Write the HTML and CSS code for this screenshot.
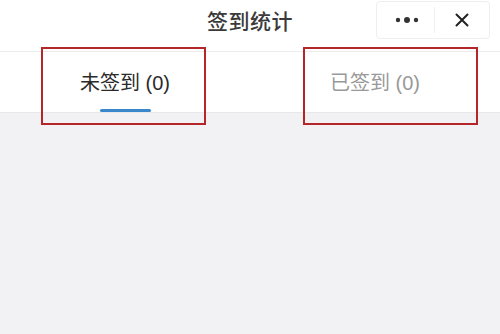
FILE: index.html
```html
<!DOCTYPE html>
<html lang="zh">
<head>
<meta charset="utf-8">
<link rel="stylesheet" href="styles.css">
</head>
<body>
<div class="page">
  <header class="nav">
    <h1 class="title">签到统计</h1>
    <div class="capsule">
      <button class="cap-btn" aria-label="更多">
        <svg width="24" height="8" viewBox="0 0 24 8"><circle cx="3" cy="4" r="2.2" fill="#333"/><circle cx="12" cy="4" r="3" fill="#333"/><circle cx="21" cy="4" r="2.2" fill="#333"/></svg>
      </button>
      <span class="cap-sep"></span>
      <button class="cap-btn" aria-label="关闭">
        <svg width="14" height="14" viewBox="0 0 14 14"><path d="M1.5 1.5 L12.5 12.5 M12.5 1.5 L1.5 12.5" stroke="#222" stroke-width="2" stroke-linecap="round"/></svg>
      </button>
    </div>
  </header>
  <nav class="tabs">
    <div class="tab active"><span class="tab-label">未签到 (0)</span><span class="bar"></span></div>
    <div class="tab"><span class="tab-label">已签到 (0)</span></div>
  </nav>
  <main class="content"></main>
  <div class="mark mark-left"></div>
  <div class="mark mark-right"></div>
</div>
</body>
</html>
```

FILE: styles.css
```css
* { box-sizing: border-box; margin: 0; padding: 0; }
html, body { width: 500px; height: 334px; overflow: hidden; }
body { font-family: "Noto Sans CJK SC", "Liberation Sans", sans-serif; background: #f2f2f4; }
.page { position: relative; width: 500px; height: 334px; display: flex; flex-direction: column; }
.nav {
  position: relative;
  height: 52px;
  background: #fff;
  border-bottom: 1px solid #ececec;
  display: flex;
  align-items: flex-start;
  justify-content: center;
  flex-shrink: 0;
}
.title {
  font-size: 21px;
  font-weight: 500;
  color: #3a3a3a;
  line-height: 40px;
  letter-spacing: 0.5px;
}
.capsule {
  position: absolute;
  left: 376px;
  top: 1px;
  width: 114px;
  height: 38px;
  border: 1px solid #efefef;
  border-radius: 4px;
  background: #fff;
  display: flex;
  align-items: center;
}
.cap-btn {
  flex: 1;
  height: 100%;
  border: none;
  background: transparent;
  display: flex;
  align-items: center;
  justify-content: center;
}
.cap-btn:first-child { padding-left: 3px; }
.cap-sep { width: 1px; height: 26px; background: #f0f0f0; }
.tabs {
  height: 61px;
  background: #fff;
  display: flex;
  border-bottom: 1px solid #e8e8ea;
  flex-shrink: 0;
}
.tab {
  flex: 1;
  position: relative;
  display: flex;
  align-items: center;
  justify-content: center;
  padding-bottom: 2px;
}
.tab-label {
  font-family: "Liberation Sans", "Noto Sans CJK SC", sans-serif;
  font-size: 20px;
  color: #999;
}
.tab.active .tab-label { color: #2a2a2a; }
.bar {
  position: absolute;
  left: 100px;
  bottom: 0;
  width: 51px;
  height: 3px;
  border-radius: 1.5px;
  background: #3a88cc;
}
.content { flex: 1; background: #f2f2f4; }
.mark {
  position: absolute;
  top: 47px;
  height: 78px;
  border: 2px solid #b3262a;
}
.mark-left { left: 41px; width: 165px; }
.mark-right { left: 303px; width: 175px; }
```
